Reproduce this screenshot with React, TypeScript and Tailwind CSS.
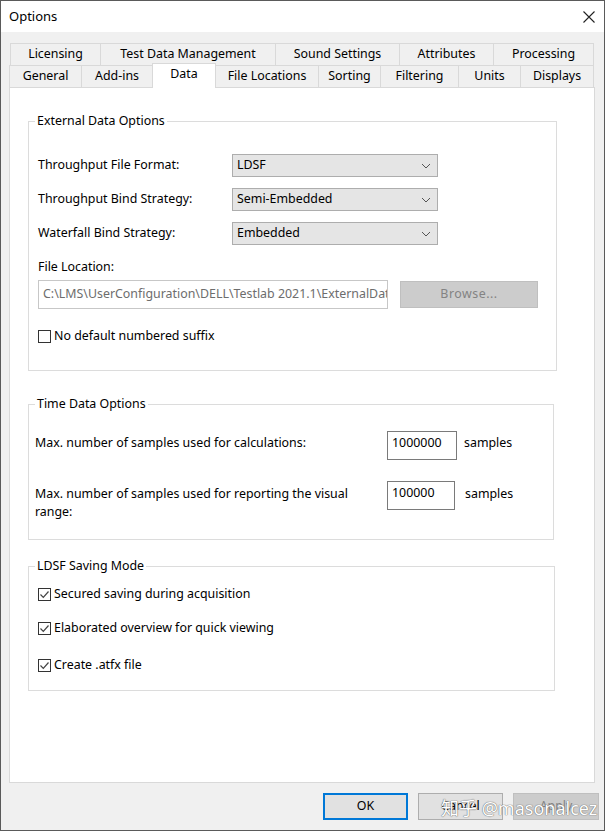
import React from "react";

const font = { fontFamily: '"Noto Sans", "Noto Sans CJK SC", sans-serif' };

const topTabs = [
  { label: "Licensing", w: "w-[90px]" },
  { label: "Test Data Management", w: "w-[175px]" },
  { label: "Sound Settings", w: "w-[124px]" },
  { label: "Attributes", w: "w-[94px]" },
  { label: "Processing", w: "w-[101px]" },
];

const bottomTabs = [
  { label: "General", w: "w-[72px]" },
  { label: "Add-ins", w: "w-[71px]" },
  { label: "Data", w: "w-[64px]" },
  { label: "File Locations", w: "w-[102px]" },
  { label: "Sorting", w: "w-[62px]" },
  { label: "Filtering", w: "w-[78px]" },
  { label: "Units", w: "w-[62px]" },
  { label: "Displays", w: "w-[74px]" },
];

function Chevron() {
  return (
    <svg width="10" height="6" viewBox="0 0 10 6" className="shrink-0">
      <path d="M1 1 L5 5 L9 1" fill="none" stroke="#555" strokeWidth="1" />
    </svg>
  );
}

function Checkbox({ checked }: { checked?: boolean }) {
  return (
    <div className="w-[13px] h-[13px] border border-[#333] bg-white flex items-center justify-center shrink-0">
      {checked && (
        <svg width="11" height="11" viewBox="0 0 11 11">
          <path d="M1.5 5.5 L4.3 8.3 L9.5 2.5" fill="none" stroke="#444" strokeWidth="1.2" />
        </svg>
      )}
    </div>
  );
}

function Select({ value }: { value: string }) {
  return (
    <div className="w-[206px] h-[23px] bg-[#e5e5e5] border border-[#adadad] flex items-center justify-between pl-[4px] pr-[6px]">
      <span>{value}</span>
      <Chevron />
    </div>
  );
}

function Group({ title, children, w }: { title: string; children: React.ReactNode; w: string }) {
  return (
    <fieldset className={`border border-[#dcdcdc] ml-[18px] ${w}`}>
      <legend className="ml-[6px] px-[2px] leading-[16px]">{title}</legend>
      {children}
    </fieldset>
  );
}

export default function App() {
  return (
    <div
      className="w-[605px] h-[831px] border border-[#5a5a5a] bg-[#f0f0f0] flex flex-col text-[12.4px] text-black overflow-hidden"
      style={font}
    >
      {/* Title bar */}
      <div className="h-[31px] bg-white flex items-center justify-between pl-[8px] pr-[9px] shrink-0">
        <span className="text-[13px]">Options</span>
        <svg width="12" height="12" viewBox="0 0 12 12">
          <path d="M0.5 0.5 L11.5 11.5 M11.5 0.5 L0.5 11.5" stroke="#222" strokeWidth="1.1" />
        </svg>
      </div>

      <div className="flex-1 flex flex-col pl-[8px] pt-[11px]">
        {/* Tabs, first row */}
        <div className="flex ml-[1px] h-[22px]">
          {topTabs.map((t, i) => (
            <div
              key={t.label}
              className={`${t.w} h-[22px] bg-[#f0f0f0] border-t border-l border-[#d9d9d9] flex items-center justify-center ${
                i === topTabs.length - 1 ? "border-r" : ""
              }`}
            >
              {t.label}
            </div>
          ))}
        </div>

        {/* Tabs, second row */}
        <div className="flex items-end h-[22px] relative z-10">
          {bottomTabs.map((t, i) => {
            const sel = t.label === "Data";
            if (sel) {
              return (
                <div
                  key={t.label}
                  className={`${t.w} h-[25px] -mb-[1px] bg-white border-t border-x border-[#d9d9d9] flex items-center justify-center pb-[3px]`}
                >
                  {t.label}
                </div>
              );
            }
            return (
              <div
                key={t.label}
                className={`${t.w} h-[22px] bg-[#f0f0f0] border-t border-[#d9d9d9] flex items-center justify-center ${
                  i === 3 ? "" : "border-l"
                } ${i === bottomTabs.length - 1 ? "border-r" : ""}`}
              >
                {t.label}
              </div>
            );
          })}
        </div>

        {/* Panel */}
        <div className="w-[586px] h-[696px] bg-white border border-[#d9d9d9] pt-[25px]">
          <Group title="External Data Options" w="w-[529px]">
            <div className="pl-[9px] pt-[25px] pb-[26px]">
              <div className="flex flex-col gap-[11px]">
                {[
                  ["Throughput File Format:", "LDSF"],
                  ["Throughput Bind Strategy:", "Semi-Embedded"],
                  ["Waterfall Bind Strategy:", "Embedded"],
                ].map(([l, v]) => (
                  <div key={l} className="flex items-center">
                    <div className="w-[194px]">{l}</div>
                    <Select value={v} />
                  </div>
                ))}
              </div>
              <div className="mt-[14px] leading-[16px]">File Location:</div>
              <div className="flex items-center mt-[5px]">
                <div className="w-[350px] h-[29px] border border-[#c7c7c7] bg-white flex items-center px-[4px] text-[#6d6d6d] whitespace-nowrap overflow-hidden">
                  C:\LMS\UserConfiguration\DELL\Testlab 2021.1\ExternalData
                </div>
                <div className="ml-[12px] w-[138px] h-[27px] bg-[#cccccc] border border-[#bfbfbf] flex items-center justify-center text-[#838383] tracking-[0.5px]">
                  Browse...
                </div>
              </div>
              <div className="flex items-center gap-[3px] mt-[19px] leading-[16px]">
                <Checkbox />
                <span>No default numbered suffix</span>
              </div>
            </div>
          </Group>

          <div className="mt-[25px]">
            <Group title="Time Data Options" w="w-[526px]">
              <div className="pl-[6px] pt-[19px] pb-[18px]">
                <div className="flex">
                  <div className="w-[352px] mt-[4px] leading-[16px]">Max. number of samples used for calculations:</div>
                  <div className="w-[70px] h-[29px] border border-[#7a7a7a] px-[4px] pt-[3px] leading-[16px]">1000000</div>
                  <div className="ml-[7px] mt-[4px] leading-[16px]">samples</div>
                </div>
                <div className="flex mt-[21px]">
                  <div className="w-[352px] mt-[4px] leading-[18px] pr-[8px]">
                    Max. number of samples used for reporting the visual range:
                  </div>
                  <div className="w-[68px] h-[29px] border border-[#7a7a7a] px-[4px] pt-[3px] leading-[16px]">100000</div>
                  <div className="ml-[10px] mt-[5px] leading-[16px]">samples</div>
                </div>
              </div>
            </Group>
          </div>

          <div className="mt-[18px]">
            <Group title="LDSF Saving Mode" w="w-[527px]">
              <div className="pl-[9px] pt-[12px] pb-[17px] flex flex-col leading-[16px]">
                <div className="flex items-center gap-[3px]">
                  <Checkbox checked />
                  <span>Secured saving during acquisition</span>
                </div>
                <div className="flex items-center gap-[3px] mt-[18px]">
                  <Checkbox checked />
                  <span>Elaborated overview for quick viewing</span>
                </div>
                <div className="flex items-center gap-[3px] mt-[21px]">
                  <Checkbox checked />
                  <span>Create .atfx file</span>
                </div>
              </div>
            </Group>
          </div>
        </div>

        {/* Buttons */}
        <div className="flex justify-end gap-[10px] mt-[10px] pr-[5px] relative">
          <div className="w-[85px] h-[27px] bg-[#e1e1e1] border-2 border-[#0078d7] flex items-center justify-center">OK</div>
          <div className="w-[85px] h-[27px] bg-[#e1e1e1] border border-[#adadad] flex items-center justify-center">Cancel</div>
          <div className="w-[86px] h-[27px] bg-[#cccccc] border border-[#bfbfbf] flex items-center justify-center text-[#838383]">Apply</div>
          <div className="absolute left-[432px] top-[2px] text-[18px] text-white pointer-events-none whitespace-nowrap [text-shadow:0_0_1px_#666,0_0_1px_#666]">
            知乎 @masonalcez
          </div>
        </div>
      </div>
    </div>
  );
}
